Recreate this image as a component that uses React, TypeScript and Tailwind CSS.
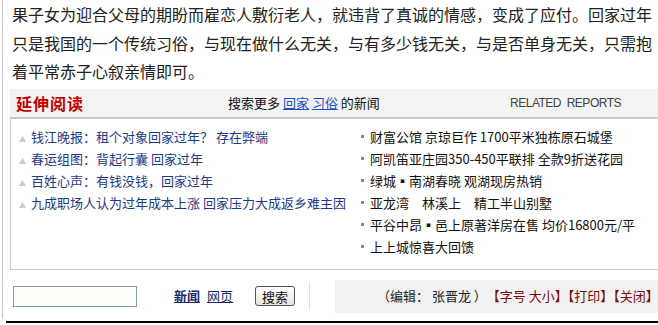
const CJK = "font-['Noto_Sans_CJK_SC','Noto_Sans',sans-serif]";

const LEFT_NEWS = [
  "钱江晚报：租个对象回家过年？ 存在弊端",
  "春运组图：背起行囊 回家过年",
  "百姓心声：有钱没钱，回家过年",
  "九成职场人认为过年成本上涨 回家压力大成返乡难主因",
];

const RIGHT_ADS = [
  "财富公馆 京琼巨作 1700平米独栋原石城堡",
  "阿凯笛亚庄园350-450平联排 全款9折送花园",
  "绿城▪南湖春晓 观湖现房热销",
  "亚龙湾　林溪上　精工半山别墅",
  "平谷中昂▪邑上原著洋房在售 均价16800元/平",
  "上上城惊喜大回馈",
];

export default function App() {
  return (
    <div className={`relative h-[325px] w-[658px] overflow-hidden bg-white ${CJK}`}>
      <div className="ml-[2px] h-[319px] border-l border-[#c4c4c4]">
        <p className="w-[653px] pl-[9px] text-[16px] leading-[28.5px] text-[#222]">
          果子女为迎合父母的期盼而雇恋人敷衍老人，就违背了真诚的情感，变成了应付。回家过年只是我国的一个传统习俗，与现在做什么无关，与有多少钱无关，与是否单身无关，只需抱着平常赤子心叙亲情即可。
        </p>

        <section className="ml-[7px] mt-[3px]">
          <header className="flex h-[30px] items-center border-b-2 border-[#c9c9c9] bg-[#f3f3f3]">
            <span className="ml-[6px] w-[212px] text-[16px] font-bold tracking-[1px] text-[#c40000]">
              延伸阅读
            </span>
            <span className="text-[13px] text-[#111]">
              搜索更多{" "}
              <a className="text-[#1c4fc4] underline">回家</a>{" "}
              <a className="text-[#1c4fc4] underline">习俗</a> 的新闻
            </span>
            <span className="ml-auto mr-[37px] font-['Liberation_Sans',sans-serif] text-[12px] tracking-[-0.5px] whitespace-pre text-[#444]">
              RELATED  REPORTS
            </span>
          </header>

          <div className="flex h-[151px] border-b border-l border-[#c8c8c8] pt-[7px]">
            <ul className="w-[340px] pl-[8px]">
              {LEFT_NEWS.map((t) => (
                <li key={t} className="flex h-[22px] items-center text-[13px] text-[#1d3a8a]">
                  <svg width="7" height="6" viewBox="0 0 7 6" className="mr-[5px] mt-[4px] shrink-0">
                    <polygon points="3.5,0 7,6 0,6" fill="#c8ccd4" />
                  </svg>
                  <span className="whitespace-nowrap">{t}</span>
                </li>
              ))}
            </ul>
            <ul className="pl-[10px]">
              {RIGHT_ADS.map((t) => (
                <li key={t} className="flex h-[22px] items-center text-[13px] text-[#111]">
                  <span className="mr-[6px] h-[3px] w-[3px] shrink-0 bg-[#888]" />
                  <span className="whitespace-nowrap">{t}</span>
                </li>
              ))}
            </ul>
          </div>
        </section>

        <div className="mt-[10px] flex items-center whitespace-nowrap">
          <input className="ml-[10px] h-[21px] w-[124px] shrink-0 border border-[#7f9db9] bg-[#fffffa]" />
          <a className="ml-[37px] shrink-0 text-[13px] font-bold text-[#1a2a66] underline">新闻</a>
          <a className="ml-[7px] shrink-0 text-[13px] text-[#1a2a66] underline">网页</a>
          <button className="ml-[22px] h-[20px] w-[40px] shrink-0 rounded-[3px] border border-[#555] bg-gradient-to-b from-white to-[#e6e6e0] text-[13px] leading-none text-[#111]">
            搜索
          </button>
          <span className="ml-[14px] h-[28px] w-px shrink-0 bg-[#dde6f0]" />
          <div className="ml-[25px] flex h-[33px] flex-1 items-center bg-[#f1f1f1] pl-[42px] text-[13px]">
            <span className="text-[#222]">（编辑： 张晋龙 ）</span>
            <span className="text-[#7a0a0a]">【字号 大小】【打印】【关闭】</span>
          </div>
        </div>
      </div>
      <div className="ml-[6px] mt-[2px] h-[2px] bg-black" />
    </div>
  );
}
